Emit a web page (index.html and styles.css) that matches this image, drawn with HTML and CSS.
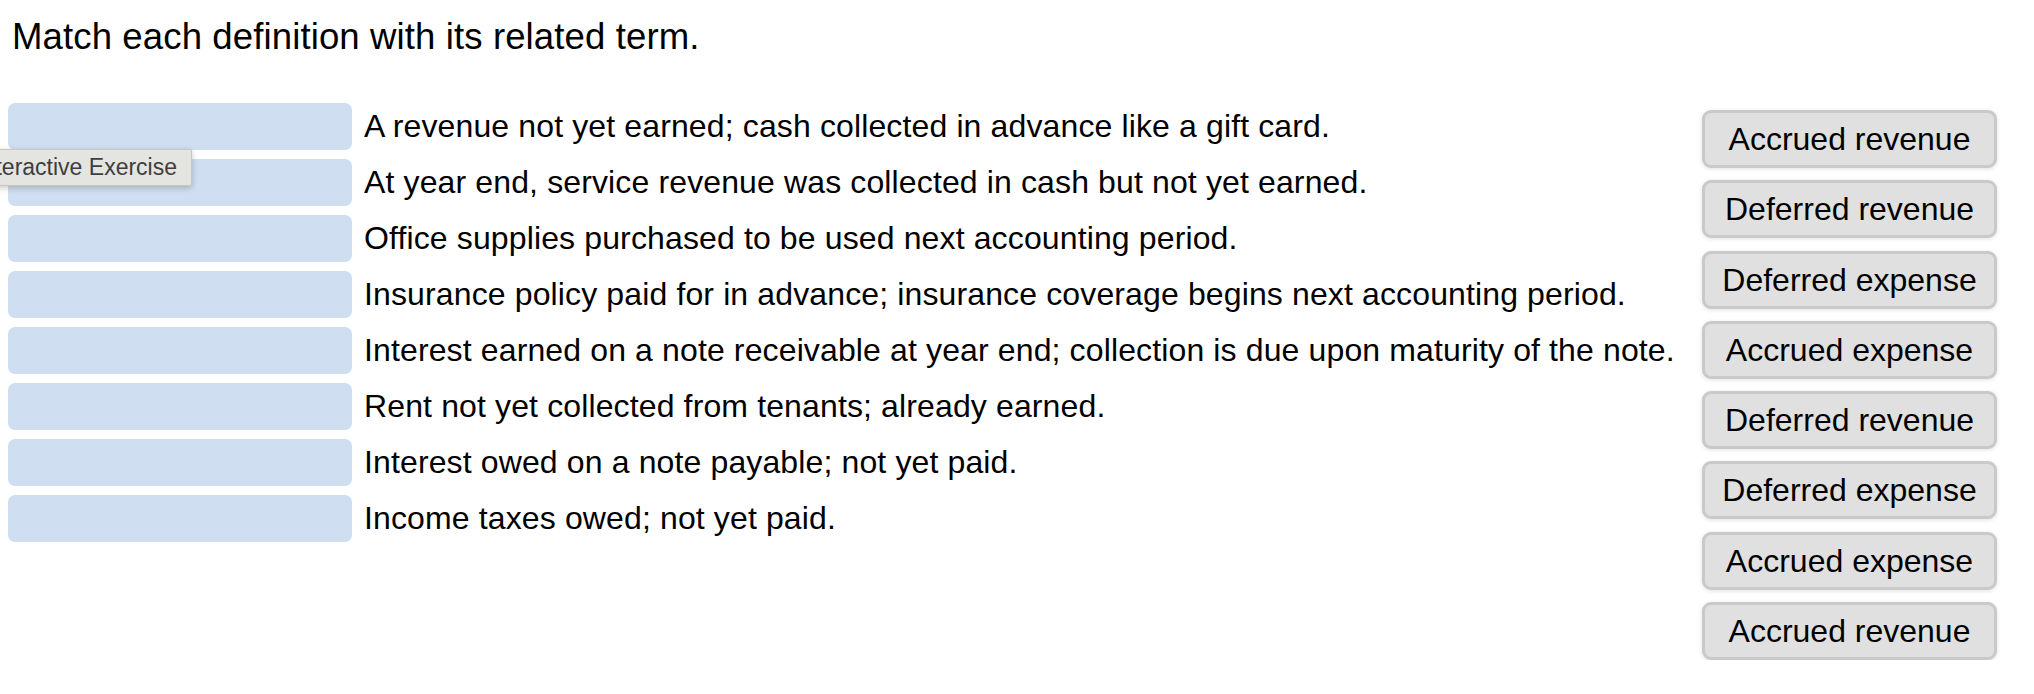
FILE: index.html
```html
<!DOCTYPE html>
<html lang="en">
<head>
<meta charset="utf-8">
<title>Matching</title>
<link rel="stylesheet" href="styles.css">
</head>
<body>
<div class="page">
  <h1 class="prompt">Match each definition with its related term.</h1>
  <div class="exercise">
    <ul class="definitions">
      <li class="row"><div class="drop"></div><span class="def">A revenue not yet earned; cash collected in advance like a gift card.</span></li>
      <li class="row"><div class="drop"><div class="tooltip">Interactive Exercise</div></div><span class="def">At year end, service revenue was collected in cash but not yet earned.</span></li>
      <li class="row"><div class="drop"></div><span class="def">Office supplies purchased to be used next accounting period.</span></li>
      <li class="row"><div class="drop"></div><span class="def">Insurance policy paid for in advance; insurance coverage begins next accounting period.</span></li>
      <li class="row"><div class="drop"></div><span class="def">Interest earned on a note receivable at year end; collection is due upon maturity of the note.</span></li>
      <li class="row"><div class="drop"></div><span class="def">Rent not yet collected from tenants; already earned.</span></li>
      <li class="row"><div class="drop"></div><span class="def">Interest owed on a note payable; not yet paid.</span></li>
      <li class="row"><div class="drop"></div><span class="def">Income taxes owed; not yet paid.</span></li>
    </ul>
    <div class="terms">
      <div class="term">Accrued revenue</div>
      <div class="term">Deferred revenue</div>
      <div class="term">Deferred expense</div>
      <div class="term">Accrued expense</div>
      <div class="term">Deferred revenue</div>
      <div class="term">Deferred expense</div>
      <div class="term">Accrued expense</div>
      <div class="term">Accrued revenue</div>
    </div>
  </div>
</div>
</body>
</html>
```

FILE: styles.css
```css
html, body {
  margin: 0;
  padding: 0;
  background: #ffffff;
}

body {
  font-family: "Liberation Sans", Arial, Helvetica, sans-serif;
  color: #000000;
  overflow: hidden;
}

.page {
  padding: 0 37px 0 8px;
}

.prompt {
  margin: 16px 0 0 4px;
  font-size: 36.6px;
  font-weight: normal;
  line-height: 41px;
  letter-spacing: 0.1px;
}

.exercise {
  display: flex;
  justify-content: space-between;
  align-items: flex-start;
  margin-top: 46px;
}

.definitions {
  list-style: none;
  margin: 0;
  padding: 0;
  display: flex;
  flex-direction: column;
  gap: 9px;
}

.row {
  display: flex;
  align-items: center;
  gap: 12px;
  height: 47px;
}

.drop {
  position: relative;
  flex: none;
  width: 344px;
  height: 47px;
  background: #cfdef0;
  border-radius: 7px;
}

.def {
  font-size: 32px;
  letter-spacing: 0.13px;
  white-space: nowrap;
  line-height: 37px;
}

/* hover hint hanging over the second drop zone */
.tooltip {
  position: absolute;
  right: calc(100% - 184px);
  top: -10px;
  height: 37px;
  box-sizing: border-box;
  padding: 4px 14px 0 8px;
  background: #e4e4e0;
  border: 1px solid #c6c6c2;
  border-radius: 2px;
  box-shadow: 0 2px 6px rgba(0, 0, 0, 0.22);
  font-size: 23px;
  line-height: 26px;
  color: #3e3e3e;
  white-space: nowrap;
}

.terms {
  flex: none;
  width: 295px;
  margin-top: 7px;
  display: flex;
  flex-direction: column;
  gap: 12.3px;
}

.term {
  box-sizing: border-box;
  height: 58px;
  border: 3px solid #c9c9c9;
  border-radius: 9px;
  background: #e0e0e0;
  box-shadow: 0 1px 4px rgba(0, 0, 0, 0.12);
  font-size: 32px;
  line-height: 52px;
  text-align: center;
  white-space: nowrap;
}
```
